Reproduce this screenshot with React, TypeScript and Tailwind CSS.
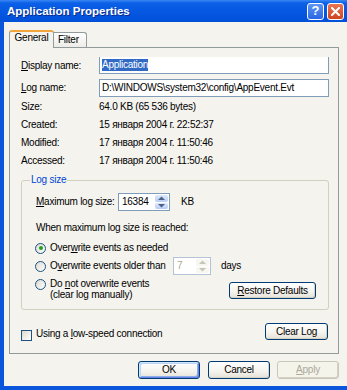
import type { ReactNode } from "react";

function U({ children }: { children: ReactNode }) {
  return <span className="underline underline-offset-[1px]">{children}</span>;
}

function XpButton({
  children,
  className = "",
  disabled = false,
  isDefault = false
}: {
  children: ReactNode;
  className?: string;
  disabled?: boolean;
  isDefault?: boolean;
}) {
  const tone = disabled
    ? "border-[#c9c7ba] bg-[#f5f4ea] text-[#aca899]"
    : "border-[#003c74] bg-[linear-gradient(180deg,#ffffff_0%,#f5f4ef_55%,#e4e1d7_100%)] text-black";
  const ring = isDefault
    ? "shadow-[inset_1px_1px_0_#cee7ff,inset_-1px_-1px_0_#6982ee,inset_2px_2px_0_#bcd4f6,inset_-2px_-2px_0_#89ade4]"
    : "shadow-[inset_-1px_-1px_0_#d6d0c5]";
  return (
    <div className={`flex shrink-0 items-center justify-center rounded-[3px] border ${tone} ${ring} ${className}`}>
      {children}
    </div>
  );
}

function SpinArrow({ up, color }: { up?: boolean; color: string }) {
  return (
    <svg width="7" height="4" viewBox="0 0 7 4">
      <path d={up ? "M0 4 L3.5 0.5 L7 4 Z" : "M0 0 L3.5 3.5 L7 0 Z"} fill={color} />
    </svg>
  );
}

function Spin({ value, disabled = false, className }: { value: string; disabled?: boolean; className: string }) {
  const arrow = disabled ? "#c7c5b9" : "#4d6185";
  const btn = disabled ? "bg-[#f7f6f1]" : "bg-[linear-gradient(180deg,#dde8fd,#b8ccf5)]";
  return (
    <div className={`flex h-[18px] shrink-0 border bg-white ${disabled ? "border-[#b4c2d6] text-[#aca899]" : "border-[#7f9db9]"} ${className}`}>
      <span className="flex flex-1 items-center pl-[3px]">{value}</span>
      <div className="flex w-[15px] flex-col gap-px p-px">
        <div className={`flex flex-1 items-center justify-center rounded-[2px] ${btn}`}>
          <SpinArrow up color={arrow} />
        </div>
        <div className={`flex flex-1 items-center justify-center rounded-[2px] ${btn}`}>
          <SpinArrow color={arrow} />
        </div>
      </div>
    </div>
  );
}

function Radio({ checked = false }: { checked?: boolean }) {
  return (
    <span className="-ml-px flex h-[11px] w-[11px] shrink-0 items-center justify-center rounded-full border border-[#1c5180] bg-[linear-gradient(135deg,#dcdad0,#ffffff)]">
      {checked && <span className="h-[4px] w-[4px] rounded-full bg-[#21a121]" />}
    </span>
  );
}

const info = [
  ["Size:", "64.0 KB (65 536 bytes)"],
  ["Created:", "15 января 2004 г. 22:52:37"],
  ["Modified:", "17 января 2004 г. 11:50:46"],
  ["Accessed:", "17 января 2004 г. 11:50:46"]
];

export default function App() {
  return (
    <div className="h-[390px] w-[347px] overflow-hidden bg-[#f4f3ee] font-['Liberation_Sans',Arial,sans-serif] text-[10px] leading-[12px] tracking-[-0.25px] text-black">
      <div className="flex h-[22px] items-center bg-[linear-gradient(180deg,#3a86f4_0%,#0a60e6_14%,#0657e1_55%,#0150d9_100%)] pl-[7px] pr-[3px]">
        <span className="text-[11.5px] font-bold tracking-normal text-white [text-shadow:1px_1px_0_#0b2a8a]">
          Application Properties
        </span>
        <div className="ml-auto flex gap-[3px]">
          <div className="flex h-[17px] w-[17px] items-center justify-center rounded-[3px] border border-white bg-[linear-gradient(180deg,#5d96f5,#2a66e4)] text-[13px] font-bold tracking-normal text-white">
            ?
          </div>
          <div className="flex h-[17px] w-[17px] items-center justify-center rounded-[3px] border border-white bg-[linear-gradient(180deg,#ea7653,#cf4520)]">
            <svg width="9" height="9" viewBox="0 0 9 9">
              <path d="M1 1 L8 8 M8 1 L1 8" stroke="#fff" strokeWidth="2" strokeLinecap="square" />
            </svg>
          </div>
        </div>
      </div>

      <div className="flex h-[368px] flex-col border-b-4 border-l-4 border-[#0b55dc]">
        <div className="-mb-px mt-[8px] flex items-end pl-[5px]">
          <div className="relative z-10 flex h-[18px] w-[45px] justify-center rounded-t-[3px] border-x border-t-2 border-x-[#919b9c] border-t-[#f3a43a] bg-[#f4f3ee]">
            General
          </div>
          <div className="flex h-[16px] w-[33px] items-center rounded-tr-[3px] border-r border-t border-[#919b9c] bg-[linear-gradient(180deg,#ffffff,#ecebe6)] pb-[2px] pl-[4px]">
            Filter
          </div>
        </div>

        <div className="ml-[5px] flex h-[307px] w-[330px] flex-col border border-[#919b9c] pl-[11px] pr-[9px] pt-[9px]">
          <div className="flex h-[17px] items-center">
            <span className="w-[78px]">
              <U>D</U>isplay name:
            </span>
            <div className="flex h-full flex-1 items-center border-x border-b border-[#7f9db9] bg-white pl-[2px]">
              <span className="bg-[#316ac5] text-white">Application</span>
            </div>
          </div>
          <div className="mt-[5px] flex h-[18px] items-center">
            <span className="w-[78px]">
              <U>L</U>og name:
            </span>
            <div className="flex h-full flex-1 items-center border border-[#7f9db9] bg-white pl-[2px]">
              D:\WINDOWS\system32\config\AppEvent.Evt
            </div>
          </div>
          <div className="mt-px flex flex-col">
            {info.map(([label, value]) => (
              <div className="flex h-[18px] items-center" key={label}>
                <span className="w-[78px]">{label}</span>
                <span>{value}</span>
              </div>
            ))}
          </div>

          <fieldset className="mt-[4px] rounded-[3px] border border-[#d0d0bf]">
            <legend className="ml-[8px] px-[1px] text-[#0046d5]">Log size</legend>
            <div className="flex flex-col pb-[9px] pl-[14px] pr-[12px] pt-[7px]">
              <div className="flex h-[18px] items-center">
                <span className="w-[82px]">
                  <U>M</U>aximum log size:
                </span>
                <Spin className="w-[52px]" value="16384" />
                <span className="ml-[11px]">KB</span>
              </div>
              <div className="mt-[11px]">When maximum log size is reached:</div>
              <div className="mt-[8px] flex h-[12px] items-center">
                <Radio checked />
                <span className="ml-[4px]">
                  Over<U>w</U>rite events as needed
                </span>
              </div>
              <div className="mt-[3px] flex h-[18px] items-center">
                <Radio />
                <span className="ml-[4px] w-[123px]">
                  O<U>v</U>erwrite events older than
                </span>
                <Spin className="w-[38px]" disabled value="7" />
                <span className="ml-[10px]">days</span>
              </div>
              <div className="mt-[3px] flex items-start">
                <div className="mt-px">
                  <Radio />
                </div>
                <span className="ml-[4px] leading-[11px]">
                  Do <U>n</U>ot overwrite events
                  <br />
                  (clear log manually)
                </span>
                <XpButton className="ml-auto mt-[4px] h-[17px] w-[87px]">
                  <span>
                    <U>R</U>estore Defaults
                  </span>
                </XpButton>
              </div>
            </div>
          </fieldset>

          <div className="mt-[13px] flex items-start">
            <span className="mt-[7px] h-[11px] w-[11px] shrink-0 border border-[#1c5180] bg-[linear-gradient(135deg,#dcdad0,#ffffff)]" />
            <span className="ml-[4px] mt-[5px]">
              Using a <U>l</U>ow-speed connection
            </span>
            <XpButton className="ml-auto mr-px h-[17px] w-[63px]">Clear Log</XpButton>
          </div>
        </div>

        <div className="mt-[7px] flex justify-end gap-[7px] pr-[8px]">
          <XpButton className="mr-px h-[18px] w-[62px]" isDefault>
            OK
          </XpButton>
          <XpButton className="h-[18px] w-[62px]">Cancel</XpButton>
          <XpButton className="h-[18px] w-[62px]" disabled>
            <span>
              <U>A</U>pply
            </span>
          </XpButton>
        </div>
      </div>
    </div>
  );
}
